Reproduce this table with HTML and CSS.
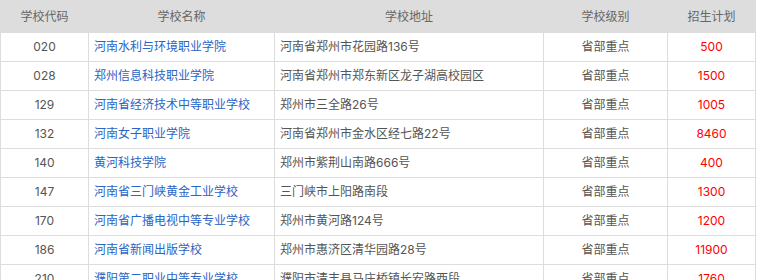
FILE: index.html
```html
<!DOCTYPE html>
<html lang="zh">
<head>
<meta charset="utf-8">
<link rel="stylesheet" href="styles.css">
</head>
<body>
<table class="schools">
  <colgroup>
    <col class="c-code"><col class="c-name"><col class="c-addr"><col class="c-level"><col class="c-plan">
  </colgroup>
  <thead>
    <tr><th>学校代码</th><th>学校名称</th><th>学校地址</th><th>学校级别</th><th>招生计划</th></tr>
  </thead>
  <tbody>
    <tr><td class="code">020</td><td class="name"><a href="#">河南水利与环境职业学院</a></td><td class="addr">河南省郑州市花园路136号</td><td class="level">省部重点</td><td class="plan">500</td></tr>
    <tr><td class="code">028</td><td class="name"><a href="#">郑州信息科技职业学院</a></td><td class="addr">河南省郑州市郑东新区龙子湖高校园区</td><td class="level">省部重点</td><td class="plan">1500</td></tr>
    <tr><td class="code">129</td><td class="name"><a href="#">河南省经济技术中等职业学校</a></td><td class="addr">郑州市三全路26号</td><td class="level">省部重点</td><td class="plan">1005</td></tr>
    <tr><td class="code">132</td><td class="name"><a href="#">河南女子职业学院</a></td><td class="addr">河南省郑州市金水区经七路22号</td><td class="level">省部重点</td><td class="plan">8460</td></tr>
    <tr><td class="code">140</td><td class="name"><a href="#">黄河科技学院</a></td><td class="addr">郑州市紫荆山南路666号</td><td class="level">省部重点</td><td class="plan">400</td></tr>
    <tr><td class="code">147</td><td class="name"><a href="#">河南省三门峡黄金工业学校</a></td><td class="addr">三门峡市上阳路南段</td><td class="level">省部重点</td><td class="plan">1300</td></tr>
    <tr><td class="code">170</td><td class="name"><a href="#">河南省广播电视中等专业学校</a></td><td class="addr">郑州市黄河路124号</td><td class="level">省部重点</td><td class="plan">1200</td></tr>
    <tr><td class="code">186</td><td class="name"><a href="#">河南省新闻出版学校</a></td><td class="addr">郑州市惠济区清华园路28号</td><td class="level">省部重点</td><td class="plan">11900</td></tr>
    <tr><td class="code">210</td><td class="name"><a href="#">濮阳第二职业中等专业学校</a></td><td class="addr">濮阳市清丰县马庄桥镇长安路西段</td><td class="level">省部重点</td><td class="plan">1760</td></tr>
  </tbody>
</table>
</body>
</html>
```
FILE: styles.css
```css
html, body {
  margin: 0;
  padding: 0;
  background: #fff;
}
body {
  font-family: "Inter", "Noto Sans CJK SC", sans-serif;
  font-size: 12px;
  color: #555;
}
.schools {
  border-collapse: collapse;
  table-layout: fixed;
  width: 755px;
}
.c-code { width: 88px; }
.c-name { width: 186px; }
.c-addr { width: 269px; }
.c-level { width: 124px; }
.c-plan { width: 88px; }
.schools th {
  height: 31px;
  padding: 0;
  background: #dddddd;
  border: 1px solid #dddddd;
  font-weight: normal;
  color: #666;
  text-align: center;
  line-height: 30px;
}
.schools td {
  height: 28px;
  padding: 0 5px;
  border: 1px solid #dddddd;
  line-height: 28px;
  white-space: nowrap;
  overflow: hidden;
}
.schools .code, .schools .level, .schools .plan { text-align: center; }
.schools .name a {
  color: #2a64c5;
  text-decoration: none;
}
.schools .plan { color: #ff0000; }
```
